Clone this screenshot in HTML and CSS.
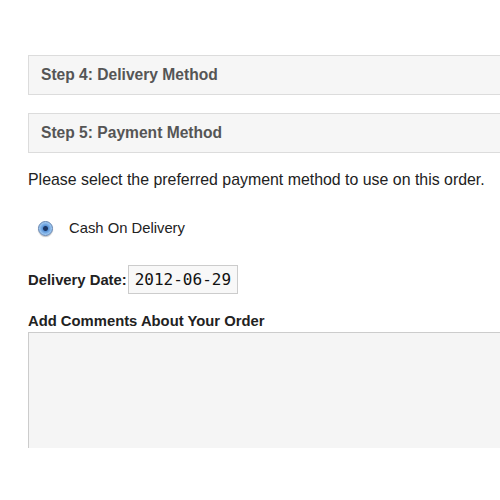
FILE: index.html
```html
<!DOCTYPE html>
<html>
<head>
    <title>Checkout</title>
    <link rel="stylesheet" href="styles.css">
</head>
<body>
    <div class="checkout">
        <div class="step-heading">Step 4: Delivery Method</div>
        <div class="step-heading">Step 5: Payment Method</div>

        <p class="intro">Please select the preferred payment method to use on this order.</p>

        <!-- payment options -->
        <label class="payment-option">
            <input type="radio" name="payment" value="cod" checked>
            <span>Cash On Delivery</span>
        </label>

        <div class="delivery-date">
            <label for="deliveryDate">Delivery Date:</label>
            <input type="text" id="deliveryDate" value="2012-06-29">
        </div>

        <div class="comments">
            <label for="comment">Add Comments About Your Order</label>
            <textarea id="comment"></textarea>
        </div>
    </div>
</body>
</html>
```

FILE: styles.css
```css
html, body {
    margin: 0;
    padding: 0;
    background: #fff;
}

body {
    font-family: "Liberation Sans", Arial, sans-serif;
    font-size: 14.8px;
    color: #222;
    overflow: hidden;
}

.checkout {
    padding: 55px 0 0 28px;
}

.step-heading {
    box-sizing: border-box;
    height: 40px;
    margin-bottom: 18px;
    padding: 0 12px;
    line-height: 38px;
    border: 1px solid #dcdcdc;
    border-right: none;
    background: #f6f6f6;
    color: #555;
    font-weight: bold;
    font-size: 15.6px;
}

.intro {
    margin: 0;
    line-height: 18px;
    font-size: 15.9px;
}

.payment-option {
    display: flex;
    align-items: center;
    gap: 16px;
    margin: 29px 0 0 10px;
    height: 20px;
}

.payment-option input {
    appearance: none;
    box-sizing: border-box;
    width: 15px;
    height: 15px;
    margin: 0;
    border: 1px solid #5d7fae;
    border-radius: 50%;
    background: radial-gradient(circle, #1c3663 0 2px, #5b95d8 3px, #9cc6f0 6px, #d3e6f9 100%);
    box-shadow: 0 1px 1px rgba(0, 0, 0, 0.25);
}

.delivery-date {
    display: flex;
    align-items: center;
    gap: 0;
    margin-top: 27px;
}

.delivery-date label {
    font-weight: bold;
}

.delivery-date input {
    box-sizing: border-box;
    width: 110px;
    height: 29px;
    margin-left: 1px;
    padding: 0 6px;
    border: 1px solid #ccc;
    background: #f8f8f8;
    font-family: "DejaVu Sans Mono", monospace;
    font-size: 16px;
    color: #111;
}

.comments label {
    display: block;
    margin-top: 18px;
    font-weight: bold;
    line-height: 18px;
}

.comments textarea {
    display: block;
    box-sizing: border-box;
    width: 100%;
    height: 116px;
    margin-top: 2px;
    border: 1px solid #ccc;
    border-bottom: none;
    border-right: none;
    background: #f5f5f5;
    resize: none;
}
```
